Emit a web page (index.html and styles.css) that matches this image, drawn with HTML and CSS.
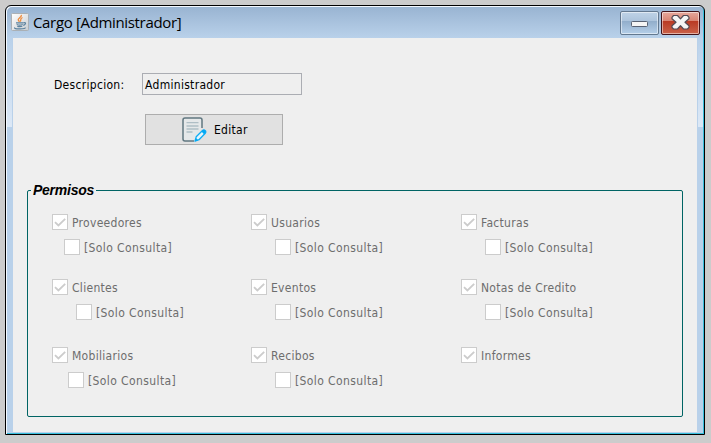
FILE: index.html
```html
<!DOCTYPE html>
<html lang="es">
<head>
<meta charset="utf-8">
<title>Cargo [Administrador]</title>
<link rel="stylesheet" href="styles.css">
</head>
<body>
<svg width="0" height="0" class="defs"><defs>
<symbol id="check" viewBox="0 0 16 16"><path d="M2 7.200 5.400 10.500 12.200 3.800" fill="none" stroke="#ccc" stroke-width="1.800"/></symbol>
</defs></svg>
<div class="window">
  <header class="titlebar">
    <svg class="java" width="18" height="18" viewBox="0 0 18 18">
      <defs><linearGradient id="tile" x2="1" y2="1"><stop stop-color="#fff"/><stop offset="1" stop-color="#c9cdd1"/></linearGradient></defs>
      <rect x=".5" y=".5" width="17" height="17" rx="1" fill="url(#tile)" stroke="#aab0b5"/>
      <path d="M10.4 1.8C11 4 7 5 7.2 6.700q.1 1 1.300 2.100M11.500 4.500C8.500 5.700 10.500 6.800 9.300 8.600" fill="none" stroke="#ee8a3a" stroke-width="1.300"/>
      <path d="M5 9.800h7.500M5.700 11.500q3 1.100 6 0M6.300 13.300q2.700.8 5 0M4 14.500q-1.500 1.500 5 1.300 6 0 5-1.300M12.700 9.600q2.300-.2 1.700 1.200-.5 1.100-2.200 1.500" fill="none" stroke="#5c829e" stroke-width="1.200"/>
    </svg>
    <h1 class="title">Cargo [Administrador]</h1>
    <div class="control minimize"><svg width="39" height="24" viewBox="0 0 39 24"><rect x="11.500" y="10.500" width="16" height="5" rx="1" fill="#f5f5f5" stroke="#596273"/></svg></div>
    <div class="control close"><svg width="39" height="24" viewBox="0 0 39 24"><path d="M12.500 4.500h4l3 3.300 3-3.300h4l1.500 1.800v1.500L24 11.200l4 3.600v1.500l-1.500 1.700h-4l-3-3.300-3 3.300h-4L11 16.300v-1.500l4-3.600-4-3.400V6.300z" fill="#f5f5f5" stroke="#534b55" stroke-width="1.200" stroke-linejoin="round"/></svg></div>
  </header>
  <main class="content">
    <div class="field"><label class="label">Descripcion:</label><div class="input"><span class="value">Administrador</span></div></div>
    <button class="edit">
      <svg width="25" height="26" viewBox="0 0 25 26">
        <path d="M12 24H3Q1 24 1 22V3Q1 1 3 1H18Q20 1 20 3V11" fill="#e5e8e9" stroke="#607780" stroke-width="1.500"/>
        <path d="M4.500 5.700h12M4.500 9h12M4.500 12h12M4.500 15h6" stroke="#afbec5" stroke-width="1.300"/>
        <path d="M13 24.200 14.200 19.800 20.800 13.200Q22 12.400 23.300 13.700 24.300 15 23.300 16.200L17 22.700z" fill="#e4f5fd" stroke="#0cadf5" stroke-width="1.300" stroke-linejoin="round"/>
        <path d="M19.500 14.500 21 13q1.400-.6 2.300.7.900 1.400 0 2.500L22 17.300zM13 24.200l1-3.200 2.200 2.200z" fill="#03a9f4"/>
      </svg>
      <span class="edit-text">Editar</span>
    </button>
    <section class="group">
      <h2 class="legend">Permisos</h2>
      <div class="columns">
        <div class="column">
          <div class="permission sub-near"><div class="option"><svg class="box"><use href="#check" width="16" height="16"/></svg><span class="text">Proveedores</span></div><div class="option sub"><i class="box"></i><span class="text solo">[Solo Consulta]</span></div></div>
          <div class="permission"><div class="option"><svg class="box"><use href="#check" width="16" height="16"/></svg><span class="text">Clientes</span></div><div class="option sub"><i class="box"></i><span class="text solo">[Solo Consulta]</span></div></div>
          <div class="permission sub-mid"><div class="option"><svg class="box"><use href="#check" width="16" height="16"/></svg><span class="text">Mobiliarios</span></div><div class="option sub"><i class="box"></i><span class="text solo">[Solo Consulta]</span></div></div>
        </div>
        <div class="column">
          <div class="permission"><div class="option"><svg class="box"><use href="#check" width="16" height="16"/></svg><span class="text">Usuarios</span></div><div class="option sub"><i class="box"></i><span class="text solo">[Solo Consulta]</span></div></div>
          <div class="permission"><div class="option"><svg class="box"><use href="#check" width="16" height="16"/></svg><span class="text">Eventos</span></div><div class="option sub"><i class="box"></i><span class="text solo">[Solo Consulta]</span></div></div>
          <div class="permission"><div class="option"><svg class="box"><use href="#check" width="16" height="16"/></svg><span class="text">Recibos</span></div><div class="option sub"><i class="box"></i><span class="text solo">[Solo Consulta]</span></div></div>
        </div>
        <div class="column">
          <div class="permission"><div class="option"><svg class="box"><use href="#check" width="16" height="16"/></svg><span class="text">Facturas</span></div><div class="option sub"><i class="box"></i><span class="text solo">[Solo Consulta]</span></div></div>
          <div class="permission"><div class="option"><svg class="box"><use href="#check" width="16" height="16"/></svg><span class="text">Notas de Credito</span></div><div class="option sub"><i class="box"></i><span class="text solo">[Solo Consulta]</span></div></div>
          <div class="permission"><div class="option"><svg class="box"><use href="#check" width="16" height="16"/></svg><span class="text">Informes</span></div></div>
        </div>
      </div>
    </section>
  </main>
</div>
</body>
</html>
```
FILE: styles.css
```css
* { box-sizing: border-box; }
html, body { height: 100%; }
body {
  margin: 0;
  padding: 5px 6px 8px 5px;
  overflow: hidden;
  background: #ccc;
  font: 12px/16px "DejaVu Sans Condensed", "DejaVu Sans", sans-serif;
  font-stretch: condensed;
  letter-spacing: .3px;
  color: #000;
}
.defs { position: absolute; }
.window {
  height: 430px;
  padding: 0 7px;
  border: 1px solid #000;
  border-radius: 6px 6px 0 0;
  box-shadow: inset 1px 1px #f4f9ff, inset -1px -1px #36bedb;
  background:
    linear-gradient(#b9d1ea, #dce8f6) 1px 32px / 5px 89px no-repeat,
    linear-gradient(#b9d1ea, #dce8f6) 692px 32px / 5px 89px no-repeat,
    linear-gradient(#98b3d1, #b9d1ea 32px, #b9d1ea);
}
.titlebar { display: flex; height: 32px; align-items: flex-start; padding-top: 7px; margin: 0 -3px 0 -2px; }
.java { flex: none; }
.title {
  flex: 1;
  margin: -1px 0 0 4px;
  font: 15px/20px "Open Sans", "Noto Sans", sans-serif;
  letter-spacing: -.34px;
  white-space: nowrap;
}
.control { flex: none; width: 39px; height: 24px; margin-top: -2px; border: 1px solid #63788f; border-radius: 2px; box-shadow: inset 0 0 0 1px #ffffff80; }
.control svg { display: block; margin: -1px; }
.minimize { background: linear-gradient(#bfd3e7, #adc4dc 40%, #91adca 41%, #b5cfe9); }
.close { margin-left: 2px; border-color: #43131a; background: linear-gradient(#e6a89c, #d98473 40%, #b93923 41%, #ca624a); }
.content { height: 394px; padding: 35px 0 0 14px; background: #efefef; }
.field { display: flex; align-items: center; height: 22px; margin-left: 27px; }
.label { width: 88px; padding-top: 1px; }
.input { width: 160px; height: 22px; border: 1px solid #abadb3; padding: 3px 2px 0; }
.edit {
  display: flex;
  align-items: center;
  width: 138px;
  height: 31px;
  margin: 19px 0 0 118px;
  padding: 0 0 0 36px;
  border: 1px solid #adadad;
  background: #e1e1e1;
  font: inherit;
  letter-spacing: inherit;
  color: inherit;
}
.edit-text { margin-left: 7px; }
.group { width: 656px; height: 227px; margin-top: 45px; border: 1px solid #006464; border-radius: 2px; }
.legend {
  width: 65px;
  height: 16px;
  margin: -9px 0 0 3px;
  padding-left: 2px;
  background: #efefef;
  font: italic bold 14px/16px "Liberation Sans", Arial, sans-serif;
  letter-spacing: -.25px;
}
.columns { display: grid; grid-template-columns: 199px 210px 1fr; margin: 16px 0 0 24px; color: #6d6d6d; }
.permission { height: 65px; }
.permission:nth-child(2) { height: 68px; }
.option { display: flex; gap: 4px; height: 16px; white-space: nowrap; }
.text { padding-top: 1px; }
.solo { letter-spacing: .4px; }
.box { flex: none; width: 16px; height: 16px; border: 1px solid #ccc; background: #fff; }
.sub { margin: 9px 0 0 24px; }
.sub-near .sub { margin-left: 12px; }
.sub-mid .sub { margin-left: 16px; }
```
